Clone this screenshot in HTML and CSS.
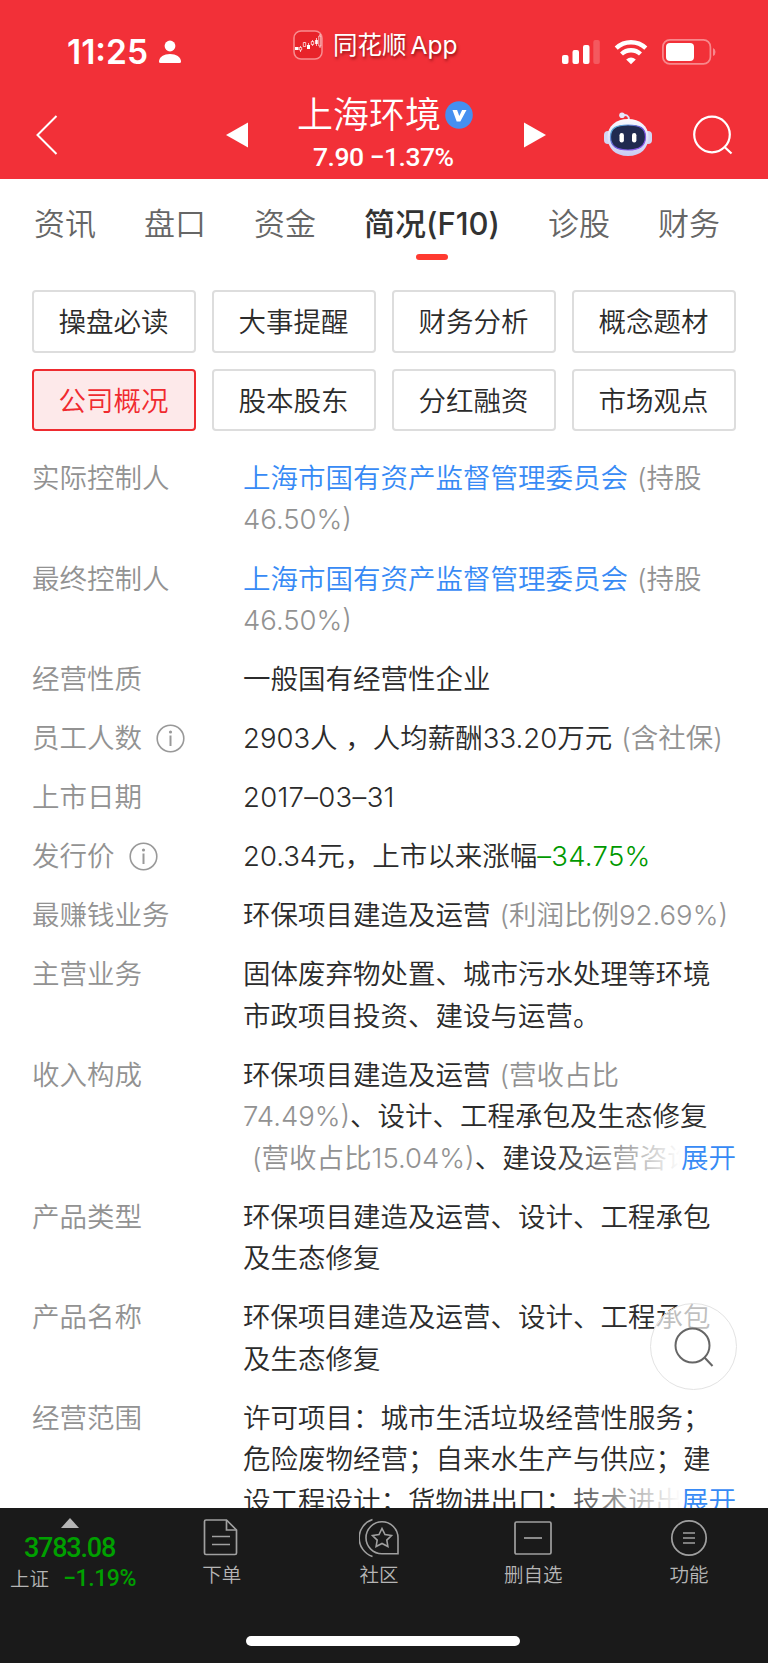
FILE: index.html
```html
<!DOCTYPE html>
<html lang="zh-CN">
  <head>
    <meta charset="UTF-8" />
    <meta name="viewport" content="width=device-width, initial-scale=1.0" />
    <title>上海环境 - 简况(F10)</title>
    <link rel="stylesheet" href="styles.css">
  </head>
  <body>
    <header class="header">
      <div class="status-bar">
        <span class="time">11:25</span>
        <svg class="person" width="22" height="24" viewBox="0 0 22 24" fill="#fff">
          <circle cx="11" cy="6" r="5.4" />
          <path d="M0 21.500C0 17 5 14 11 14s11 3 11 7.500q0 1.500-1.500 1.500h-19Q0 23 0 21.500z" />
        </svg>
        <div class="source-app">
          <svg width="30" height="30" viewBox="0 0 30 30">
            <rect x="1" y="1" width="28" height="28" rx="7" fill="#e8232a" stroke="#f88d90" stroke-width="1.500" />
            <path d="M7.500 16v6M11.500 12v2M15.500 13v6M19.500 10v6M23.500 8v8M27 4v14" stroke="#fff" stroke-width=".7" />
            <path d="M2 17h3.500v3H2zM14 15h3v4h-3zM22.200 10h2.600v4h-2.600z" fill="#fff" />
            <path d="M6.300 17.500h2.400v2.500H6.300zM10.300 12.500h2.400v4h-2.400zM18.300 11.500h2.400v3h-2.400zM25.800 6h2v10h-2z" fill="#e8232a" stroke="#fff" stroke-width=".7" />
          </svg>
          <span class="source-name">同花顺</span>
          <span class="source-suffix">App</span>
        </div>
        <svg class="signal" width="38" height="24" viewBox="0 0 38 24" fill="#fff">
          <rect x="0" y="15" width="6.500" height="9" rx="2" />
          <rect x="10.500" y="10" width="6.500" height="14" rx="2" />
          <rect x="21" y="5" width="6.500" height="19" rx="2" />
          <rect x="31.300" y="0" width="6.500" height="24" rx="2" opacity=".2" />
        </svg>
        <svg class="wifi" width="34" height="26" viewBox="0 0 34 26" fill="none" stroke="#fff" stroke-width="4.400">
          <path d="M2.200 9.200Q8.500 3.300 17 3.300t14.800 5.900" />
          <path d="M7.500 15Q11.500 11.300 17 11.300t9.500 3.700" />
          <path d="M17 25.300l-4.800-4.800q4.800-4 9.600 0z" fill="#fff" stroke="none" />
        </svg>
        <svg class="battery" width="54" height="26" viewBox="0 0 54 26">
          <rect x=".9" y=".9" width="47.500" height="24" rx="7" fill="none" stroke="#f8888c" stroke-width="1.700" />
          <rect x="4" y="4" width="28" height="18" rx="4" fill="#fff" />
          <path d="M51 9q2.500 1 2.500 4t-2.500 4z" fill="#f8888c" />
        </svg>
      </div>

      <div class="nav-bar">
        <svg class="back" width="22" height="40" viewBox="0 0 22 40" fill="none" stroke="#fff" stroke-width="2">
          <path d="M20.500 1L1.500 20l19 19" />
        </svg>
        <svg class="prev" width="22" height="26" viewBox="0 0 22 26" fill="#fff">
          <path d="M0 13L22 .5v25z" />
        </svg>
        <div class="stock">
          <div class="stock-name">
            上海环境
            <svg width="28" height="28" viewBox="0 0 28 28">
              <circle cx="14" cy="14" r="13.800" fill="#458ff0" />
              <path d="M7.500 9h4.600l2.200 6 2.800-6h4.400l-6.200 11.500h-3.600z" fill="#fff" />
            </svg>
          </div>
          <div class="stock-price">7.90 −1.37%</div>
        </div>
        <svg class="next" width="22" height="26" viewBox="0 0 22 26" fill="#fff">
          <path d="M22 13L0 .5v25z" />
        </svg>
        <svg class="robot" width="48" height="44" viewBox="0 0 48 44">
          <defs>
            <linearGradient id="shell" x1="0" y1="0" x2="0" y2="1">
              <stop offset="0" stop-color="#fafaff" />
              <stop offset="1" stop-color="#c9cdf3" />
            </linearGradient>
            <linearGradient id="rim" x1="0" y1="0" x2="1" y2="1">
              <stop offset="0" stop-color="#55c5d8" />
              <stop offset=".5" stop-color="#6a55d8" />
              <stop offset="1" stop-color="#9b5cf0" />
            </linearGradient>
          </defs>
          <path d="M18 3.500c4-1.500 7 0 7 4.500" fill="none" stroke="#dfe0f8" stroke-width="2" />
          <circle cx="18" cy="3.200" r="2.800" fill="#e6e7fb" />
          <rect x="0" y="19" width="8" height="13" rx="4" fill="#d3d6f4" />
          <rect x="40" y="19" width="8" height="13" rx="4" fill="#d3d6f4" />
          <path d="M24 7c12 0 20.500 7 20.500 18S37 44 24 44 3.500 36 3.500 25 12 7 24 7z" fill="url(#shell)" />
          <path d="M24 13c12 0 17.500 3 17.500 12S36 38 24 38 6.500 34 6.500 25 12 13 24 13z" fill="#202a50" stroke="url(#rim)" stroke-width="1.200" />
          <rect x="15.500" y="21" width="4.400" height="9.500" rx="2.200" fill="#fff" />
          <rect x="28" y="21" width="4.400" height="9.500" rx="2.200" fill="#fff" />
        </svg>
        <svg class="search" width="40" height="40" viewBox="0 0 40 40" fill="none" stroke="#fff" stroke-width="2.200">
          <circle cx="19" cy="19.500" r="17.800" />
          <path d="M31 31.500l7.500 7" />
        </svg>
      </div>
    </header>

    <nav class="tabs">
      <span class="tab">资讯</span>
      <span class="tab">盘口</span>
      <span class="tab">资金</span>
      <span class="tab active">简况(F10)</span>
      <span class="tab">诊股</span>
      <span class="tab">财务</span>
    </nav>

    <main class="content">
      <div class="menu">
        <button>操盘必读</button>
        <button>大事提醒</button>
        <button>财务分析</button>
        <button>概念题材</button>
        <button class="active">公司概况</button>
        <button>股本股东</button>
        <button>分红融资</button>
        <button>市场观点</button>
      </div>

      <dl class="info">
        <dt>实际控制人</dt>
        <dd><a>上海市国有资产监督管理委员会</a><span class="note">(持股<br>46.50%)</span></dd>

        <dt>最终控制人</dt>
        <dd><a>上海市国有资产监督管理委员会</a><span class="note">(持股<br>46.50%)</span></dd>

        <dt>经营性质</dt>
        <dd>一般国有经营性企业</dd>

        <dt>员工人数
          <svg class="tip" width="29" height="29" viewBox="0 0 29 29">
            <circle cx="14.500" cy="14.500" r="13.300" fill="none" stroke="#999" stroke-width="1.600" />
            <circle cx="14.500" cy="8" r="1.600" fill="#999" />
            <path d="M14.500 11.500v10.500" stroke="#999" stroke-width="2" />
          </svg>
        </dt>
        <dd>2903人 ，人均薪酬33.20万元<span class="note">(含社保)</span></dd>

        <dt>上市日期</dt>
        <dd class="date">2017–03–31</dd>

        <dt>发行价
          <svg class="tip" width="29" height="29" viewBox="0 0 29 29">
            <circle cx="14.500" cy="14.500" r="13.300" fill="none" stroke="#999" stroke-width="1.600" />
            <circle cx="14.500" cy="8" r="1.600" fill="#999" />
            <path d="M14.500 11.500v10.500" stroke="#999" stroke-width="2" />
          </svg>
        </dt>
        <dd>20.34元，上市以来涨幅<span class="down">–34.75%</span></dd>

        <dt>最赚钱业务</dt>
        <dd>环保项目建造及运营<span class="note">(利润比例92.69%)</span></dd>

        <dt>主营业务</dt>
        <dd>固体废弃物处置、城市污水处理等环境市政项目投资、建设与运营。</dd>

        <dt>收入构成</dt>
        <dd class="clamp">环保项目建造及运营<span class="note">(营收占比<br>74.49%)</span>、设计、工程承包及生态修复<br><span class="note">(营收占比15.04%)</span>、建设及运营咨询<a class="more">展开</a></dd>

        <dt>产品类型</dt>
        <dd>环保项目建造及运营、设计、工程承包及生态修复</dd>

        <dt>产品名称</dt>
        <dd>环保项目建造及运营、设计、工程承包及生态修复</dd>

        <dt>经营范围</dt>
        <dd class="clamp">许可项目：城市生活垃圾经营性服务；<br>危险废物经营；自来水生产与供应；建<br>设工程设计；货物进出口；技术进出口<a class="more">展开</a></dd>
      </dl>
    </main>

    <div class="float-search">
      <svg width="40" height="40" viewBox="0 0 40 40" fill="none" stroke="#666" stroke-width="2">
        <circle cx="18.500" cy="18.500" r="17" />
        <path d="M30.500 30.500l8 8.500" />
      </svg>
    </div>

    <footer class="footer">
      <div class="index">
        <svg width="18" height="10" viewBox="0 0 18 10" fill="#b5b5b5">
          <path d="M9 0l9 10H0z" />
        </svg>
        <div class="index-value">3783.08</div>
        <div class="index-change"><span>上证</span><b>−1.19%</b></div>
      </div>
      <div class="action">
        <svg width="40" height="40" viewBox="0 0 40 40" fill="none" stroke="#a0a0a0" stroke-width="1.700">
          <path d="M4 2h20.500l10 10v23q0 1.500-1.500 1.500H4q-1.500 0-1.500-1.500V3.500Q2.500 2 4 2z" />
          <path d="M24.500 2v10h10M10 18.500h18M10 26.500h18" />
        </svg>
        <span>下单</span>
      </div>
      <div class="action community">
        <svg width="40" height="40" viewBox="0 0 40 40" fill="none" stroke="#a0a0a0" stroke-width="1.600">
          <path d="M13.500 1.500a19.500 19.500 0 0 0 0 37" />
          <path d="M39 35.800H23A16 16 0 1 1 39 19.800z" />
          <path d="M23 10.500l3 6 6.500 1-4.700 4.600 1.100 6.400-5.900-3-5.900 3 1.100-6.400-4.700-4.600 6.500-1z" />
        </svg>
        <span>社区</span>
      </div>
      <div class="action">
        <svg width="40" height="40" viewBox="0 0 40 40" fill="none" stroke="#a0a0a0" stroke-width="1.700">
          <rect x="2" y="4" width="36" height="32" rx="1.500" />
          <path d="M11 20h18" />
        </svg>
        <span>删自选</span>
      </div>
      <div class="action">
        <svg width="40" height="40" viewBox="0 0 40 40" fill="none" stroke="#a0a0a0" stroke-width="1.700">
          <circle cx="20" cy="20" r="17.200" />
          <path d="M14 15h12M14 20h12M14 25h12" />
        </svg>
        <span>功能</span>
      </div>
      <div class="home-indicator"></div>
    </footer>
  </body>
</html>
```

FILE: styles.css
```css
* {
  box-sizing: border-box;
}
body {
  margin: 0;
  height: 1663px;
  display: flex;
  flex-direction: column;
  overflow: hidden;
  position: relative;
  background-color: #fff;
  color: #2b2b2b;
  font-family: Inter, "Noto Sans CJK SC", sans-serif;
  font-weight: 350;
}
svg {
  display: block;
  flex: none;
}

/* header */
.header {
  height: 179px;
  flex: none;
  background-color: #f23038;
  color: #fff;
}
.status-bar {
  height: 96px;
  padding: 7px 0 0 67px;
  display: flex;
  align-items: center;
}
.time {
  width: 92px;
  font-size: 33.5px;
  font-weight: 600;
  line-height: 40px;
  letter-spacing: 0;
}
.source-app {
  width: 268px;
  margin: 0 0 13px 112px;
  display: flex;
  align-items: center;
  font-size: 24.5px;
  font-weight: 400;
  line-height: 30px;
  text-shadow: 1px 2px 3px rgba(80, 0, 0, 0.6);
}
.source-name {
  margin-left: 10px;
}
.source-suffix {
  margin-left: 4px;
}
.signal {
  margin-left: 1px;
}
.wifi {
  margin-left: 14px;
}
.battery {
  margin-left: 14px;
}
.nav-bar {
  height: 83px;
  padding-left: 36px;
  display: flex;
  align-items: flex-start;
}
.back {
  margin-top: 19px;
}
.prev {
  margin: 26px 0 0 168px;
}
.stock {
  width: 276px;
  padding-left: 49px;
}
.stock-name {
  display: flex;
  align-items: center;
  gap: 4px;
  font-size: 36px;
  line-height: 39px;
  white-space: nowrap;
}
.stock-name svg {
  margin-top: -2px;
}
.stock-price {
  margin: 6px 0 0 16px;
  font-family: Roboto, sans-serif;
  font-size: 26.5px;
  font-weight: 500;
  line-height: 32px;
  letter-spacing: -0.5px;
}
.next {
  margin-top: 26px;
}
.robot {
  margin: 16px 0 0 58px;
}
.search {
  margin: 19px 0 0 41px;
}

/* tabs */
.tabs {
  height: 111px;
  flex: none;
  padding: 22px 48px 0 34px;
  display: flex;
  justify-content: space-between;
  font-size: 31px;
  line-height: 46px;
  color: #666;
  white-space: nowrap;
}
.tab.active {
  position: relative;
  height: 60px;
  color: #333;
  font-weight: 500;
}
.tab.active::after {
  content: "";
  position: absolute;
  left: 50%;
  top: 53px;
  width: 32px;
  height: 6px;
  margin-left: -16px;
  border-radius: 3px;
  background-color: #ff3a30;
}

/* content */
.content {
  flex: 1;
  min-height: 0;
  overflow: hidden;
  padding: 0 32px;
}
.menu {
  display: grid;
  grid-template-columns: repeat(4, 1fr);
  gap: 16px;
}
.menu button {
  height: 62.5px;
  padding: 0 1px 2px 0;
  border: 2px solid #ddd;
  border-radius: 4px;
  background-color: #fff;
  color: #2b2b2b;
  font-family: inherit;
  font-weight: inherit;
  font-size: 27.5px;
}
.menu button.active {
  border-color: #ee2b30;
  background-color: #fde9ea;
  color: #f02a2f;
}
.info {
  margin: 27px 0 0;
  display: grid;
  grid-template-columns: 211px 1fr;
  row-gap: 17.7px;
  font-size: 27.5px;
  line-height: 41.4px;
}
.info dt {
  display: flex;
  align-items: center;
  height: 41.4px;
  color: #929292;
}
.info dd {
  margin: 0;
}
.info a {
  color: #378af5;
}
.info .date {
  letter-spacing: 0.3px;
}
.tip {
  margin-left: 14px;
}
.note {
  margin-left: 9px;
  color: #929292;
}
.down {
  letter-spacing: 0.3px;
  color: #009900;
}
.clamp {
  position: relative;
  height: 124.2px;
  overflow: hidden;
  white-space: nowrap;
}
.more {
  position: absolute;
  right: 0;
  bottom: 0;
  padding-left: 130px;
  background: linear-gradient(to right, rgba(255, 255, 255, 0), #fff 130px);
}

.float-search {
  position: absolute;
  right: 31px;
  top: 1303px;
  width: 87px;
  height: 87px;
  display: flex;
  align-items: center;
  justify-content: center;
  border: 1.5px solid #e3e3e3;
  border-radius: 50%;
  background-color: rgba(255, 255, 255, 0.7);
}

/* footer */
.footer {
  height: 155px;
  flex: none;
  display: grid;
  grid-template-columns: 144px repeat(4, 155.7px);
  grid-template-rows: 128px 10px;
  background-color: #1a1a1a;
  color: #b5b5b5;
}
.index {
  display: flex;
  flex-direction: column;
  align-items: center;
  padding: 10px 5px 0 0;
  white-space: nowrap;
}
.index-value {
  margin-top: 4px;
  font-family: Roboto, sans-serif;
  font-size: 27px;
  font-weight: 500;
  line-height: 32px;
  letter-spacing: -1.2px;
  color: #00a000;
}
.index-change {
  display: flex;
  align-items: center;
  gap: 14px;
  margin-left: 7px;
  font-size: 19.5px;
  line-height: 30px;
}
.index-change b {
  font-family: Roboto, sans-serif;
  font-size: 23px;
  font-weight: 500;
  letter-spacing: -0.4px;
  color: #00a000;
}
.action {
  display: flex;
  flex-direction: column;
  align-items: center;
  padding-top: 10px;
  font-size: 19.5px;
  line-height: 28px;
}
.action span {
  margin-top: 3px;
}
.community {
  padding-left: 3px;
}
.home-indicator {
  grid-column: 1 / -1;
  justify-self: center;
  width: 274px;
  height: 10px;
  border-radius: 5px;
  background-color: #fff;
}
```
